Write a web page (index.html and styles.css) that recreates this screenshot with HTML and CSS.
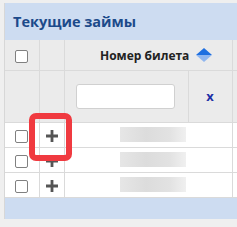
FILE: index.html
```html
<!DOCTYPE html>
<html lang="ru">
<head>
<meta charset="utf-8">
<link rel="stylesheet" href="styles.css">
</head>
<body>
<div class="panel">
  <div class="panel-title">Текущие займы</div>
  <table class="grid">
    <colgroup>
      <col class="c-check"><col class="c-plus"><col class="c-num"><col class="c-x"><col class="c-rest">
    </colgroup>
    <tr class="head">
      <td class="center"><span class="cb"></span></td>
      <td></td>
      <td colspan="2" class="head-title"><span>Номер билета</span>
        <svg class="sort" width="16" height="14" viewBox="0 0 16 14"><path d="M8 0 L16 7 L0 7 Z" fill="#1e6fe0"/><path d="M0 7 L16 7 L8 14 Z" fill="#8fb6ef"/></svg>
      </td>
      <td></td>
    </tr>
    <tr class="filter">
      <td></td>
      <td></td>
      <td><div class="input"></div></td>
      <td class="center x">x</td>
      <td></td>
    </tr>
    <tr class="row">
      <td class="center"><span class="cb"></span></td>
      <td class="center"><svg class="plus" width="12" height="12" viewBox="0 0 12 12"><path d="M6 0 V12 M0 6 H12" stroke="#555" stroke-width="2.8"/></svg></td>
      <td colspan="2" class="val"><div class="blur"></div></td>
      <td></td>
    </tr>
    <tr class="row">
      <td class="center"><span class="cb"></span></td>
      <td class="center"><svg class="plus" width="12" height="12" viewBox="0 0 12 12"><path d="M6 0 V12 M0 6 H12" stroke="#555" stroke-width="2.8"/></svg></td>
      <td colspan="2" class="val"><div class="blur"></div></td>
      <td></td>
    </tr>
    <tr class="row">
      <td class="center"><span class="cb"></span></td>
      <td class="center"><svg class="plus" width="12" height="12" viewBox="0 0 12 12"><path d="M6 0 V12 M0 6 H12" stroke="#555" stroke-width="2.8"/></svg></td>
      <td colspan="2" class="val"><div class="blur"></div></td>
      <td></td>
    </tr>
  </table>
  <div class="panel-foot"></div>
  <div class="highlight"></div>
</div>
</body>
</html>
```

FILE: styles.css
```css
html, body {
  margin: 0;
  padding: 0;
  background: #efefef;
  overflow: hidden;
  width: 237px;
  height: 227px;
  font-family: "Open Sans", "DejaVu Sans", sans-serif;
}
.panel {
  position: relative;
  margin: 3px 0 0 4px;
  width: 232px;
  border-left: 1px solid #d7d7d7;
  background: #fff;
}
.panel-title {
  height: 37px;
  line-height: 37px;
  padding-left: 8px;
  background: #cddcf1;
  color: #1c4a8a;
  font-weight: bold;
  font-size: 14.5px;
}
.grid {
  border-collapse: collapse;
  table-layout: fixed;
  width: 232px;
}
.c-check { width: 34px; }
.c-plus { width: 25px; }
.c-num { width: 124px; }
.c-x { width: 44px; }
.c-rest { width: 5px; }
.grid td {
  border: 1px solid #dadada;
  padding: 0;
}
.grid tr td:first-child { border-left: none; }
.grid tr td:last-child { border-right: none; }
.grid tr:first-child td { border-top: none; }
.center { text-align: center; vertical-align: middle; }
.head td, .filter td { background: #ebebeb; }
.head { height: 30px; }
.filter { height: 52px; }
.row { height: 25px; }
.row td { background: #fff; }
.cb {
  display: inline-block;
  width: 11px;
  height: 11px;
  border: 1px solid #808080;
  border-radius: 2px;
  background: #fff;
  vertical-align: middle;
}
.head-title {
  text-align: right;
  padding-right: 20px !important;
  font-weight: bold;
  font-size: 12px;
  color: #222;
  white-space: nowrap;
}
.head-title span { vertical-align: middle; }
.sort { vertical-align: middle; margin-left: 3px; }
.input {
  margin-left: 11px;
  width: 97px;
  height: 23px;
  border: 1px solid #d0d0d0;
  border-radius: 3px;
  background: #fff;
}
.x {
  color: #1f2fa6;
  font-weight: bold;
  font-size: 13px;
}
.plus { vertical-align: middle; display: inline-block; }
.val { vertical-align: middle; }
.blur {
  margin-left: 55px;
  width: 66px;
  height: 15px;
  background: linear-gradient(90deg, #e6e6e6 0%, #dcdcdc 40%, #e2e2e2 75%, #f0f0f0 100%);
  filter: blur(0.6px);
}
.panel-foot {
  height: 21px;
  background: #cddcf1;
}
.highlight {
  position: absolute;
  left: 24px;
  top: 110px;
  width: 31px;
  height: 36px;
  border: 6px solid #f03a40;
  border-radius: 7px;
}
```
